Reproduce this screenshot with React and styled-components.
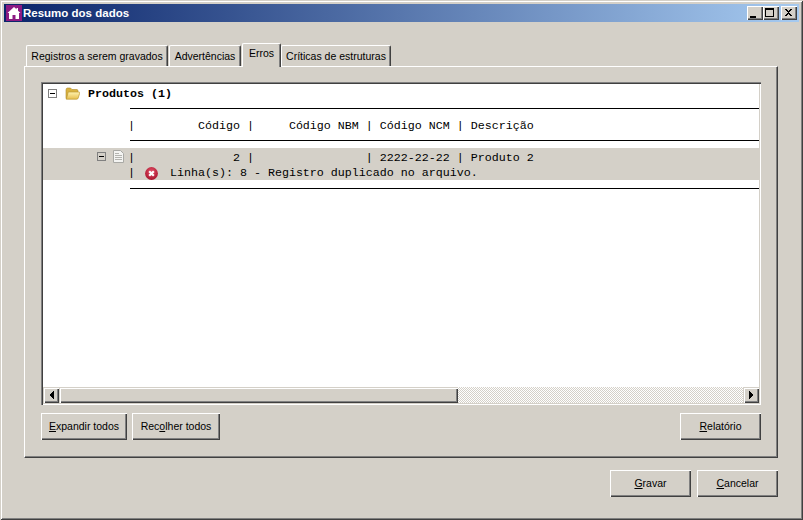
import React from "react";
import styled, { createGlobalStyle } from "styled-components";

const Global = createGlobalStyle`
  html, body { margin: 0; padding: 0; background: #d4d0c8; }
  * { box-sizing: border-box; }
`;

const Win = styled.div`
  width: 803px;
  height: 520px;
  padding: 4px;
  display: flex;
  flex-direction: column;
  background: #d4d0c8;
  font-family: "Liberation Sans", Arial, sans-serif;
  font-size: 10.5px;
  color: #000;
  overflow: hidden;
  box-shadow: inset 1px 1px 0 #d4d0c8, inset -1px -1px 0 #404040, inset 2px 2px 0 #fff, inset -2px -2px 0 #808080;
`;

const TitleBar = styled.div`
  height: 18px;
  flex: none;
  display: flex;
  align-items: center;
  padding: 0 2px;
  background: linear-gradient(90deg, #0a246a, #a6caf0);
`;

const TitleText = styled.span`
  margin-left: 1px;
  flex: 1;
  color: #fff;
  font-weight: bold;
  font-size: 11.5px;
`;

const CtlButton = styled.button`
  width: 16px;
  height: 14px;
  padding: 0;
  margin-left: ${(p) => p.$gap}px;
  display: block;
  background: #d4d0c8;
  border: none;
  box-shadow: inset 1px 1px 0 #fff, inset -1px -1px 0 #404040, inset -2px -2px 0 #808080;
  svg { display: block; }
`;

const Main = styled.main`
  flex: 1;
  min-height: 0;
  display: flex;
  flex-direction: column;
  padding: 21px 21px 19px 20px;
`;

const TabStrip = styled.div`
  height: 23px;
  flex: none;
  display: flex;
  align-items: flex-end;
  padding-left: 2px;
  position: relative;
  z-index: 1;
`;

const Tab = styled.div`
  width: ${(p) => p.$w}px;
  height: ${(p) => (p.$active ? 24 : 21)}px;
  margin-left: ${(p) => p.$ml}px;
  margin-bottom: ${(p) => (p.$active ? -1 : 0)}px;
  padding-top: ${(p) => (p.$active ? 2 : 3)}px;
  flex: none;
  text-align: center;
  background: #d4d0c8;
  border-top: 1px solid #fff;
  border-left: 1px solid #fff;
  border-right: 1px solid #404040;
  box-shadow: inset -1px 0 0 #808080;
  border-top-left-radius: 2px;
  border-top-right-radius: 2px;
  font-size: 10.5px;
  line-height: 14px;
  white-space: nowrap;
`;

const Pane = styled.section`
  flex: 1;
  min-height: 0;
  display: flex;
  flex-direction: column;
  padding: 15px 16px 17px 16px;
  border-top: 1px solid #fff;
  border-left: 1px solid #fff;
  border-right: 1px solid #404040;
  border-bottom: 1px solid #404040;
  box-shadow: inset -1px -1px 0 #808080;
`;

const Tree = styled.div`
  flex: 1;
  min-height: 0;
  display: flex;
  flex-direction: column;
  background: #fff;
  padding: 2px;
  box-shadow: inset 1px 1px 0 #808080, inset 2px 2px 0 #404040, inset -1px -1px 0 #fff, inset -2px -2px 0 #d4d0c8;
`;

const TreeBody = styled.div`
  flex: 1;
  min-height: 0;
  overflow: hidden;
  font-family: "Liberation Mono", "Courier New", monospace;
  font-size: 11.67px;
  line-height: 16px;
`;

const RootRow = styled.div`
  height: 16px;
  margin-top: 1px;
  display: flex;
  align-items: center;
  padding-left: 5px;
  font-weight: bold;
  svg { flex: none; display: block; }
`;

const RootLabel = styled.span`
  position: relative;
  top: 1px;
`;

const Expander = styled.span`
  width: 9px;
  height: 9px;
  flex: none;
  display: flex;
  align-items: center;
  justify-content: center;
  border: 1px solid #808080;
  &::before { content: ""; width: 5px; height: 1px; background: #000; }
`;

const FolderWrap = styled.span`
  margin: 0 8px 0 8px;
  display: flex;
`;

const Mono = styled.pre`
  margin: 0;
  font: inherit;
  white-space: pre;
  position: relative;
  top: ${(p) => p.$top ?? 1}px;
`;

const HeaderBlock = styled.div`
  margin: 7px 0 0 87px;
  height: 33px;
  border-top: 1px solid #000;
  border-bottom: 1px solid #000;
  display: flex;
  align-items: center;
  ${Mono} { margin-left: -2px; }
`;

const SelectedBlock = styled.div`
  margin-top: 7px;
  background: #d4d0c8;
`;

const SelRow = styled.div`
  height: 16px;
  display: flex;
  align-items: center;
  padding-left: 85px;
  position: relative;
`;

const RowTools = styled.span`
  position: absolute;
  left: 54px;
  top: 2px;
  display: flex;
  align-items: center;
  gap: 7px;
  svg { display: block; }
`;

const ErrorMark = styled.span`
  position: absolute;
  left: 102px;
  top: 3px;
  svg { display: block; }
`;

const Rule = styled.div`
  margin: 8px 0 0 87px;
  border-top: 1px solid #000;
`;

const ScrollBar = styled.div`
  height: 16px;
  flex: none;
  display: flex;
`;

const ScrollBtn = styled.div`
  width: 16px;
  flex: none;
  display: flex;
  align-items: center;
  justify-content: center;
  background: #d4d0c8;
  box-shadow: inset 1px 1px 0 #d4d0c8, inset 2px 2px 0 #fff, inset -1px -1px 0 #404040, inset -2px -2px 0 #808080;
`;

const Thumb = styled(ScrollBtn)`
  width: 399px;
`;

const Track = styled.div`
  flex: 1;
  background: repeating-conic-gradient(#d4d0c8 0 25%, #fff 0 50%) 0 0 / 2px 2px;
`;

const ButtonRow = styled.div`
  flex: none;
  display: flex;
  margin-top: 8px;
  gap: 5px;
`;

const Spacer = styled.div`
  flex: 1;
`;

const FooterRow = styled.footer`
  flex: none;
  display: flex;
  justify-content: flex-end;
  margin-top: 12px;
  gap: 6px;
`;

const Btn = styled.button`
  width: ${(p) => p.$w}px;
  height: 27px;
  padding: 0 0 1px;
  background: #d4d0c8;
  color: #000;
  border: none;
  font-family: "Liberation Sans", Arial, sans-serif;
  font-size: 10.5px;
  white-space: nowrap;
  box-shadow: inset 1px 1px 0 #fff, inset -1px -1px 0 #404040, inset -2px -2px 0 #808080;
`;

const HomeIcon = () => (
  <svg width="16" height="16" viewBox="0 0 16 16" shapeRendering="crispEdges">
    <rect width="16" height="16" fill="#8c1a82" />
    <path d="M8 2 L1.5 8 H3 V14 H6.5 V10 H9.5 V14 H13 V8 H14.5 L12 5.7 V3 H10.5 V4.3 Z" fill="#fff" shapeRendering="auto" />
  </svg>
);

const FolderIcon = () => (
  <svg width="15" height="13" viewBox="0 0 15 13">
    <defs>
      <linearGradient id="folderFront" x1="0" y1="0" x2="0" y2="1">
        <stop offset="0" stopColor="#fff3b0" />
        <stop offset="1" stopColor="#e6bd4c" />
      </linearGradient>
    </defs>
    <path d="M1 3 Q1 1 2.5 1 H5.5 L7 2.5 H12 Q13 2.5 13 4 V6 H4 L1.5 12 Q1 12 1 11 Z" fill="#d9b23f" stroke="#b08c2c" strokeWidth=".6" />
    <path d="M3.2 5 H14 Q15 5 14.7 6.2 L13.2 11 Q12.9 12.2 11.6 12.2 H1.4 Z" fill="url(#folderFront)" stroke="#bb9a34" strokeWidth=".7" />
  </svg>
);

const DocIcon = () => (
  <svg width="11" height="13" viewBox="0 0 11 13">
    <path d="M.5 .5 H7.5 L10.5 3.5 V12.5 H.5 Z" fill="#f4f4f2" stroke="#a9a9a5" />
    <path d="M2 3.5 H6 M2 5.5 H9 M2 7.5 H9 M2 9.5 H9" stroke="#b4b4b0" />
  </svg>
);

const ErrorIcon = () => (
  <svg width="13" height="13" viewBox="0 0 13 13">
    <defs>
      <radialGradient id="errFill" cx=".5" cy=".35" r=".7">
        <stop offset="0" stopColor="#e25068" />
        <stop offset="1" stopColor="#a50f28" />
      </radialGradient>
    </defs>
    <circle cx="6.5" cy="6.5" r="6.4" fill="url(#errFill)" />
    <path d="M4.2 4.2 L8.8 8.8 M8.8 4.2 L4.2 8.8" stroke="#fff" strokeWidth="2.2" />
  </svg>
);

const MinGlyph = () => (
  <svg width="14" height="12" viewBox="0 0 14 12" shapeRendering="crispEdges">
    <rect x="3" y="9" width="6" height="2" fill="#000" />
  </svg>
);

const MaxGlyph = () => (
  <svg width="14" height="12" viewBox="0 0 14 12" shapeRendering="crispEdges">
    <path d="M2 1 H11 V10 H2 Z M3 3 V9 H10 V3 Z" fill="#000" fillRule="evenodd" />
  </svg>
);

const CloseGlyph = () => (
  <svg width="14" height="12" viewBox="0 0 14 12" shapeRendering="crispEdges">
    <path d="M4 2h2v1h1v1h1V3h1V2h2v1h-1v1H9v1H8v1h1v1h1v1h1v1H9V8H8V7H7v1H6v1H4V8h1V7h1V6h1V5H6V4H5V3H4z" fill="#000" />
  </svg>
);

const ArrowLeft = () => (
  <svg width="5" height="8" viewBox="0 0 5 8" shapeRendering="crispEdges">
    <path d="M4 0h1v8H4V7H3V6H2V5H1V3h1V2h1V1h1z" fill="#000" />
  </svg>
);

const ArrowRight = () => (
  <svg width="5" height="8" viewBox="0 0 5 8" shapeRendering="crispEdges">
    <path d="M0 0h1v1h1v1h1v1h1v2H3v1H2v1H1v1H0z" fill="#000" />
  </svg>
);

const HEADER = "|         Código |     Código NBM | Código NCM | Descrição";
const ROW = "|              2 |                | 2222-22-22 | Produto 2";
const DETAIL = "|     Linha(s): 8 - Registro duplicado no arquivo.";

export default function App() {
  return (
    <Win>
      <Global />
      <TitleBar>
        <HomeIcon />
        <TitleText>Resumo dos dados</TitleText>
        <CtlButton $gap={0}><MinGlyph /></CtlButton>
        <CtlButton $gap={0}><MaxGlyph /></CtlButton>
        <CtlButton $gap={2}><CloseGlyph /></CtlButton>
      </TitleBar>
      <Main>
        <TabStrip>
          <Tab $w={142} $ml={0}>Registros a serem gravados</Tab>
          <Tab $w={72} $ml={1}>Advertências</Tab>
          <Tab $w={39} $ml={1} $active>Erros</Tab>
          <Tab $w={110} $ml={0}>Críticas de estruturas</Tab>
        </TabStrip>
        <Pane>
          <Tree>
            <TreeBody>
              <RootRow>
                <Expander />
                <FolderWrap><FolderIcon /></FolderWrap>
                <RootLabel>Produtos (1)</RootLabel>
              </RootRow>
              <HeaderBlock><Mono>{HEADER}</Mono></HeaderBlock>
              <SelectedBlock>
                <SelRow>
                  <RowTools><Expander /><DocIcon /></RowTools>
                  <Mono $top={2}>{ROW}</Mono>
                </SelRow>
                <SelRow>
                  <ErrorMark><ErrorIcon /></ErrorMark>
                  <Mono>{DETAIL}</Mono>
                </SelRow>
              </SelectedBlock>
              <Rule />
            </TreeBody>
            <ScrollBar>
              <ScrollBtn><ArrowLeft /></ScrollBtn>
              <Thumb />
              <Track />
              <ScrollBtn><ArrowRight /></ScrollBtn>
            </ScrollBar>
          </Tree>
          <ButtonRow>
            <Btn $w={86}><u>E</u>xpandir todos</Btn>
            <Btn $w={88}>Rec<u>o</u>lher todos</Btn>
            <Spacer />
            <Btn $w={81}><u>R</u>elatório</Btn>
          </ButtonRow>
        </Pane>
        <FooterRow>
          <Btn $w={81}><u>G</u>ravar</Btn>
          <Btn $w={81}><u>C</u>ancelar</Btn>
        </FooterRow>
      </Main>
    </Win>
  );
}
